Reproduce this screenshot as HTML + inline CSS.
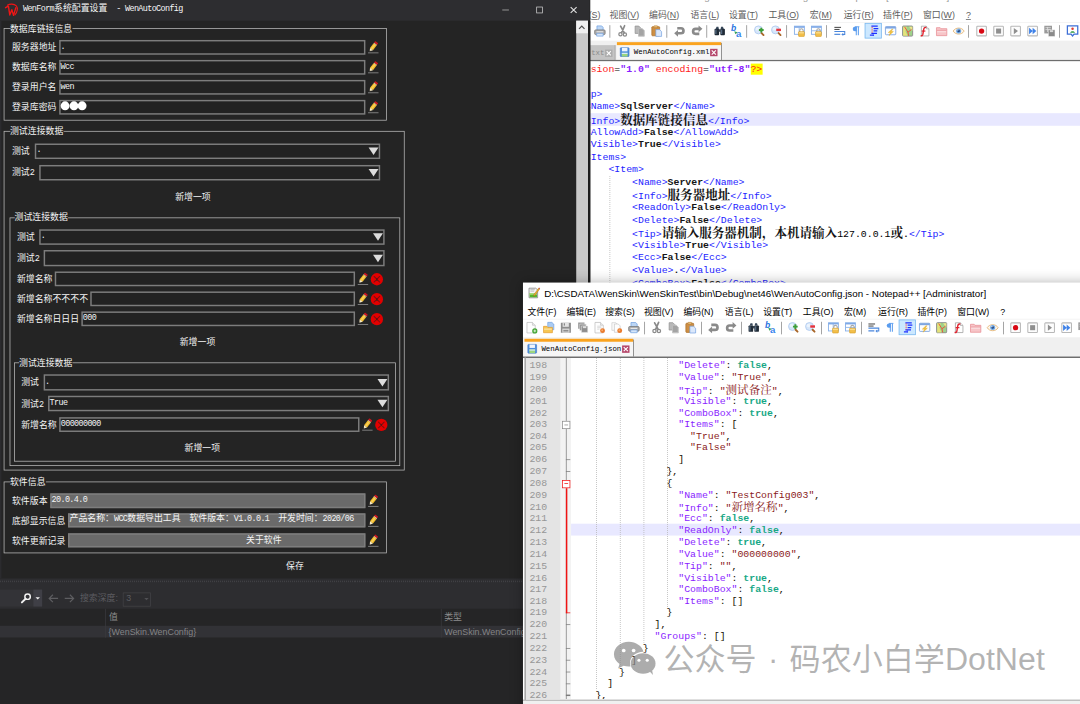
<!DOCTYPE html>
<html lang="zh"><head><meta charset="utf-8"><title>WenAutoConfig</title>
<style>
html,body{margin:0;padding:0;width:1080px;height:704px;overflow:hidden;background:#fff}
body{font-family:"Liberation Sans",sans-serif}
#wrap{position:relative;width:1080px;height:704px;overflow:hidden;background:#fff}
#stage{position:absolute;left:0;top:0;width:1461px;height:953px;transform:scale(0.7397);transform-origin:0 0;overflow:hidden;background:#fff}
.a{position:absolute;white-space:pre}
svg{display:block;overflow:visible}
.c{display:inline-block;vertical-align:baseline;white-space:nowrap;text-align:left;font-family:"Liberation Sans","Noto Sans CJK SC",sans-serif}
.ft{font:12px/14px "Liberation Sans",sans-serif;color:#f4f4f4}
.ft .m{font:11.4px "Liberation Mono",monospace;letter-spacing:-.84px}
.vs{font:12px/14px "Liberation Sans",sans-serif}
.np{overflow:hidden}
.tt{font:13.25px "Liberation Sans",sans-serif;color:#000}
.mn{font:12px "Liberation Sans",sans-serif;color:#000}
.tb{font:10px "Liberation Mono",monospace;color:#000}
.ed{overflow:hidden;background:#fff}
.ln{font:13.33px "Liberation Mono",monospace;color:#969696;text-align:right}
.cl{font:13.33px "Liberation Mono",monospace;color:#000}
.cl .c{font-size:15.6px;font-family:"Liberation Serif","Noto Serif CJK SC",serif}
.bk .cl .c{font-size:16.95px}
.ina .tt{color:#9a9a9a}
.ina .mn{color:#5c5c5c}
.k{color:#8a1dff}
.v{color:#8a1a1a}
.b{color:#18a886;font-weight:bold}
.p{color:#161000}
.xt{color:#2424ff}
.xb{color:#161616;font-weight:bold}
.xn{color:#000}
.xa{color:#ff1a1a}
.xv{color:#8a1dff;font-weight:bold}
.xr{color:#ff1a1a}
.xr.y,.yl{background:#ffff00}
.wm{font:42px "Liberation Sans","Noto Sans CJK SC",sans-serif;color:rgba(120,120,120,.56)}
</style></head>
<body><div id="wrap"><div id="stage">
<div class="a np ina" style="left:660.13px;top:-18.93px;width:946.33px;height:700px;background:#fff;box-shadow:0 0 17px rgba(0,0,0,.32)">
<div class="a" style="left:7.6px;top:6px;width:16px;height:16px"><svg width="16" height="16" viewBox="0 0 16 16"><path d="M1.200 1.600h9l2.600 2.400v10.600h-11.600z" fill="#f4f4f4" stroke="#7a7a7a" stroke-width="1"/><path d="M2 8h10v6h-10z" fill="#55b62e"/><path d="M2 8h10v2.400h-10z" fill="#a8dc7c"/><path d="M3 3.600h6M3 5.600h5" stroke="#a8a8a8" stroke-width=".9"/><path d="M14.200 1.400l1.400 1.200-6.400 9-2 .9.400-2.100z" fill="#f1b02c" stroke="#8a5a16" stroke-width=".5"/><path d="M14.200 1.400l1.400 1.200.5-1.500z" fill="#c8161d"/></svg></div>
<div class="a tt" style="left:29.3px;top:6px;height:18px;line-height:18px">D:\CSDATA\WenSkin\WenSkinTest\bin\Debug\net46\WenAutoConfig.xml - Notepad++ [Administrator]</div>
<div class="a mn" style="left:6.49px;top:32px;height:16px;line-height:16px"><span class="c" style="width:2em">文件</span>(<u>F</u>)</div>
<div class="a mn" style="left:59.21px;top:32px;height:16px;line-height:16px"><span class="c" style="width:2em">编辑</span>(<u>E</u>)</div>
<div class="a mn" style="left:111.67px;top:32px;height:16px;line-height:16px"><span class="c" style="width:2em">搜索</span>(<u>S</u>)</div>
<div class="a mn" style="left:163.99px;top:32px;height:16px;line-height:16px"><span class="c" style="width:2em">视图</span>(<u>V</u>)</div>
<div class="a mn" style="left:217.39px;top:32px;height:16px;line-height:16px"><span class="c" style="width:2em">编码</span>(<u>N</u>)</div>
<div class="a mn" style="left:273.35px;top:32px;height:16px;line-height:16px"><span class="c" style="width:2em">语言</span>(<u>L</u>)</div>
<div class="a mn" style="left:325.27px;top:32px;height:16px;line-height:16px"><span class="c" style="width:2em">设置</span>(<u>T</u>)</div>
<div class="a mn" style="left:378.8px;top:32px;height:16px;line-height:16px"><span class="c" style="width:2em">工具</span>(<u>O</u>)</div>
<div class="a mn" style="left:434.5px;top:32px;height:16px;line-height:16px"><span class="c" style="width:1em">宏</span>(<u>M</u>)</div>
<div class="a mn" style="left:480.47px;top:32px;height:16px;line-height:16px"><span class="c" style="width:2em">运行</span>(<u>R</u>)</div>
<div class="a mn" style="left:533.73px;top:32px;height:16px;line-height:16px"><span class="c" style="width:2em">插件</span>(<u>P</u>)</div>
<div class="a mn" style="left:587.54px;top:32px;height:16px;line-height:16px"><span class="c" style="width:2em">窗口</span>(<u>W</u>)</div>
<div class="a mn" style="left:645.67px;top:32px;height:16px;line-height:16px"><u>?</u></div>
<div class="a" style="left:0;top:49.4px;width:946.33px;height:1px;background:#f0f0f0"></div>
<div class="a" style="left:4.4px;top:53.3px;width:16px;height:16px"><svg width="16" height="16" viewBox="0 0 16 16"><path d="M1.4 .9h7.4l3.8 3.8v10.4h-11.2z" fill="#fdfdfd" stroke="#bdbdbd" stroke-width="1"/><path d="M8.8 .9v3.8h3.8" fill="#e9e9e9" stroke="#bdbdbd" stroke-width=".8"/><circle cx="12" cy="12.4" r="3.5" fill="#43a535"/><path d="M12 10.600v3.600M10.200 12.400h3.600" stroke="#e4f6dc" stroke-width="1.200"/></svg></div>
<div class="a" style="left:27.4px;top:53.3px;width:16px;height:16px"><svg width="16" height="16" viewBox="0 0 16 16"><path d="M6.5 .8h5.6l2.6 2.6v7.4h-8.2z" fill="#a9cbf3" stroke="#6f9fe0" stroke-width=".9"/><path d="M.8 6.2h4.6l1.2 1.4h6.2v7.2h-12z" fill="#f6c653" stroke="#e3992a" stroke-width=".9"/><rect x="1.6" y="9" width="10.4" height="2" fill="#fbe09a"/></svg></div>
<div class="a" style="left:50.4px;top:53.3px;width:16px;height:16px"><svg width="16" height="16" viewBox="0 0 16 16"><path d="M1.2 1.2h13.6v13.6h-13.6z" fill="#8e8e8e"/><rect x="3.6" y="1.2" width="8.4" height="5.6" fill="#e4e4e4"/><rect x="5.2" y="2" width="1.4" height="3.2" fill="#7a7a7a"/><rect x="3.2" y="9.2" width="9.6" height="5.6" fill="#dadada"/><rect x="4.6" y="11" width="6.8" height="2.2" fill="#8e8e8e"/></svg></div>
<div class="a" style="left:73.4px;top:53.3px;width:16px;height:16px"><svg width="16" height="16" viewBox="0 0 16 16"><path d="M1.6 1h8.6v8.4h-8.6z" fill="#9a9a9a"/><path d="M3.8 3.2h8.6v8.6h-8.6z" fill="#8a8a8a" stroke="#f4f4f4" stroke-width=".7"/><path d="M6 5.6h8.6v8.8h-8.6z" fill="#8e8e8e" stroke="#f4f4f4" stroke-width=".7"/><rect x="8" y="6" width="4.6" height="2.6" fill="#dedede"/></svg></div>
<div class="a" style="left:96.4px;top:53.3px;width:16px;height:16px"><svg width="16" height="16" viewBox="0 0 16 16"><path d="M1.4 .9h7.4l3.8 3.8v10.4h-11.2z" fill="#fdfdfd" stroke="#bdbdbd" stroke-width="1"/><path d="M8.8 .9v3.8h3.8" fill="#e9e9e9" stroke="#bdbdbd" stroke-width=".8"/><path d="M4.4 6h5.6M4.4 8h5.6M4.4 10h3" stroke="#c8c8c8" stroke-width=".9"/><circle cx="11.6" cy="12" r="3.3" fill="#ea7a2c"/><circle cx="11.1" cy="11.4" r="1.3" fill="#f6a869"/></svg></div>
<div class="a" style="left:119.4px;top:53.3px;width:16px;height:16px"><svg width="16" height="16" viewBox="0 0 16 16"><path d="M1.2 1.2h5.2l2.4 2.4v8h-7.6z" fill="#fbfbfb" stroke="#cacaca" stroke-width=".9"/><path d="M4.6 3h5.2l2.6 2.6v8.6h-7.8z" fill="#fdfdfd" stroke="#c4c4c4" stroke-width=".9"/><circle cx="11.8" cy="12" r="3.3" fill="#ea7a2c"/><circle cx="11.3" cy="11.4" r="1.3" fill="#f6a869"/></svg></div>
<div class="a" style="left:142.4px;top:53.3px;width:16px;height:16px"><svg width="16" height="16" viewBox="0 0 16 16"><path d="M4 1h6.4l2 2v5h-8.4z" fill="#bcd6f5" stroke="#6a9be0" stroke-width=".9"/><rect x=".9" y="6.4" width="14.2" height="6.4" rx="1.4" fill="#a9a9a9" stroke="#6c6c6c" stroke-width=".9"/><rect x="3.4" y="8.2" width="9.2" height="1.6" fill="#e6e6e6"/><path d="M3.6 11h8.8v3.8h-8.8z" fill="#d6e6f8" stroke="#6a9be0" stroke-width=".9"/></svg></div>
<div class="a" style="left:164.2px;top:52.6px;width:1.1px;height:17.6px;background:#858585"></div>
<div class="a" style="left:173.4px;top:53.3px;width:16px;height:16px"><svg width="16" height="16" viewBox="0 0 16 16"><path d="M10.400 .8 L6.400 10.200 M5 1.400 L9.800 10.200" stroke="#8a8a8a" stroke-width="2.300" fill="none" stroke-linecap="round"/><circle cx="4.800" cy="12.400" r="2.200" fill="none" stroke="#8a8a8a" stroke-width="1.700"/><circle cx="10.800" cy="12.600" r="2.200" fill="none" stroke="#8a8a8a" stroke-width="1.700"/></svg></div>
<div class="a" style="left:196.4px;top:53.3px;width:16px;height:16px"><svg width="16" height="16" viewBox="0 0 16 16"><path d="M1.6 1.2h5l2.6 2.6v7.4h-7.6z" fill="#b9b9b9" stroke="#8c8c8c" stroke-width=".9"/><path d="M6.2 4.6h5l2.8 2.8v7.6h-7.8z" fill="#a4a4a4" stroke="#f0f0f0" stroke-width=".9"/><path d="M6.2 4.6h5l2.8 2.8v7.6h-7.8z" fill="none" stroke="#8a8a8a" stroke-width=".5"/></svg></div>
<div class="a" style="left:219.4px;top:53.3px;width:16px;height:16px"><svg width="16" height="16" viewBox="0 0 16 16"><rect x="1.2" y="2" width="10.6" height="12.4" rx="1" fill="#cd8f45" stroke="#a86a22" stroke-width=".9"/><rect x="4" y=".8" width="5" height="2.6" rx=".6" fill="#e8c07a" stroke="#a86a22" stroke-width=".6"/><path d="M6.6 6h5l2.8 2.8v6.4h-7.8z" fill="#dbe8fb" stroke="#6f9fe0" stroke-width=".9"/></svg></div>
<div class="a" style="left:241.2px;top:52.6px;width:1.1px;height:17.6px;background:#858585"></div>
<div class="a" style="left:250.4px;top:53.3px;width:16px;height:16px"><svg width="16" height="16" viewBox="0 0 16 16"><path d="M5 11h4.600a3.400 3.400 0 0 0 0-6.800h-5" fill="none" stroke="#8a8a8a" stroke-width="3.600"/><path d="M.4 11l5.200-4.600v9.200z" fill="#8a8a8a"/></svg></div>
<div class="a" style="left:273.4px;top:53.3px;width:16px;height:16px"><svg width="16" height="16" viewBox="0 0 16 16"><path d="M11 5h-4.600a3.400 3.400 0 0 0 0 6.800h5" fill="none" stroke="#8a8a8a" stroke-width="3.600"/><path d="M15.600 5l-5.200-4.600v9.200z" fill="#8a8a8a"/></svg></div>
<div class="a" style="left:295.2px;top:52.6px;width:1.1px;height:17.6px;background:#858585"></div>
<div class="a" style="left:304.4px;top:53.3px;width:16px;height:16px"><svg width="16" height="16" viewBox="0 0 16 16"><path d="M2.6 5.2l1-3.2h2.6l.6 3.2M9.2 5.2l.6-3.2h2.6l1 3.2" fill="#394a5c"/><rect x="1" y="5" width="6.2" height="8.6" rx="1.2" fill="#1f2a36"/><rect x="8.8" y="5" width="6.2" height="8.6" rx="1.2" fill="#1f2a36"/><rect x="6.6" y="5.6" width="2.8" height="3.4" fill="#32414f"/><rect x="2" y="6" width="1.6" height="6" fill="#5a7088"/><rect x="9.8" y="6" width="1.6" height="6" fill="#5a7088"/></svg></div>
<div class="a" style="left:327.4px;top:53.3px;width:16px;height:16px"><svg width="16" height="16" viewBox="0 0 16 16"><text x=".2" y="8" font-family="Liberation Sans" font-weight="bold" font-style="italic" font-size="11.5" fill="#2b73e0">b</text><text x="7" y="15.600" font-family="Liberation Sans" font-weight="bold" font-size="13" fill="#3a86ee">a</text><path d="M4.600 8.200l4.600 1.400-3 2.600z" fill="#35a45a"/></svg></div>
<div class="a" style="left:349.2px;top:52.6px;width:1.1px;height:17.6px;background:#858585"></div>
<div class="a" style="left:358.4px;top:53.3px;width:16px;height:16px"><svg width="16" height="16" viewBox="0 0 16 16"><circle cx="6.4" cy="6.4" r="5.4" fill="#d6e6fa" stroke="#a9c6ee" stroke-width="1"/><circle cx="5" cy="5" r="2.4" fill="#ecf4fd"/><path d="M10.600 10.800l2.600 2.600" stroke="#a9672a" stroke-width="2.600" stroke-linecap="round"/><path d="M10.2 3.4v6.4M7 6.6h6.4" stroke="#3e9f38" stroke-width="2.6"/></svg></div>
<div class="a" style="left:381.4px;top:53.3px;width:16px;height:16px"><svg width="16" height="16" viewBox="0 0 16 16"><circle cx="6.4" cy="6.4" r="5.4" fill="#d6e6fa" stroke="#a9c6ee" stroke-width="1"/><circle cx="5" cy="5" r="2.4" fill="#ecf4fd"/><path d="M10.600 10.800l2.600 2.600" stroke="#a9672a" stroke-width="2.600" stroke-linecap="round"/><rect x="7.4" y="4.8" width="6.4" height="3.2" fill="#e8323c"/></svg></div>
<div class="a" style="left:403.2px;top:52.6px;width:1.1px;height:17.6px;background:#858585"></div>
<div class="a" style="left:412.4px;top:53.3px;width:16px;height:16px"><svg width="16" height="16" viewBox="0 0 16 16"><rect x="1" y="1.4" width="13.4" height="11" fill="#fff" stroke="#8db4ea" stroke-width="1.3"/><rect x="1" y="1.4" width="13.4" height="2.2" fill="#7fa9e6"/><path d="M7.4 3v9" stroke="#8db4ea" stroke-width="1.2"/><path d="M8.2 9.2v-2a2.3 2.3 0 0 1 4.6 0v2" fill="none" stroke="#a8a8a8" stroke-width="1.5"/><rect x="6.6" y="8.8" width="7.8" height="6.4" rx=".6" fill="#f3bf4a" stroke="#d79a1e" stroke-width=".8"/><rect x="7.2" y="9.4" width="6.6" height="1.8" fill="#fbdc8a"/></svg></div>
<div class="a" style="left:435.4px;top:53.3px;width:16px;height:16px"><svg width="16" height="16" viewBox="0 0 16 16"><rect x="1" y="1.4" width="13.4" height="11" fill="#fff" stroke="#8db4ea" stroke-width="1.3"/><rect x="1" y="1.4" width="13.4" height="2.2" fill="#7fa9e6"/><path d="M1 7.6h13" stroke="#8db4ea" stroke-width="1.2"/><path d="M8.2 9.2v-2a2.3 2.3 0 0 1 4.6 0v2" fill="none" stroke="#a8a8a8" stroke-width="1.5"/><rect x="6.6" y="8.8" width="7.8" height="6.4" rx=".6" fill="#f3bf4a" stroke="#d79a1e" stroke-width=".8"/><rect x="7.2" y="9.4" width="6.6" height="1.8" fill="#fbdc8a"/></svg></div>
<div class="a" style="left:457.2px;top:52.6px;width:1.1px;height:17.6px;background:#858585"></div>
<div class="a" style="left:466.4px;top:53.3px;width:16px;height:16px"><svg width="16" height="16" viewBox="0 0 16 16"><path d="M1 3h9M1 5.8h7" stroke="#3a3a3a" stroke-width="1.3"/><path d="M1 8.6h14v4h-3" fill="none" stroke="#4a86dc" stroke-width="1.4"/><path d="M1 12.4h8" stroke="#4a86dc" stroke-width="1.6"/><path d="M13 10.4l-2.6 2.2 2.6 2.2z" fill="#4a86dc"/></svg></div>
<div class="a" style="left:489.4px;top:53.3px;width:16px;height:16px"><svg width="16" height="16" viewBox="0 0 16 16"><path d="M7.600 2.200v11.400M10.400 2.200v11.400" stroke="#5a9cee" stroke-width="1.400"/><path d="M8.200 2.200h-2.400a3 3 0 0 0 0 6h2.400z" fill="#5a9cee"/><path d="M5.600 2.200h6.200" stroke="#5a9cee" stroke-width="1.200"/></svg></div>
<div class="a" style="left:508.9px;top:49.6px;width:23px;height:21.6px;background:#cce8ff;border:1px solid #7ab7ee;box-sizing:border-box"></div>
<div class="a" style="left:512.4px;top:53.3px;width:16px;height:16px"><svg width="16" height="16" viewBox="0 0 16 16"><path d="M5 1.4h8.6M8 4.6h6.4M8 7.8h5M5 11h7.6M3 13.6h5.6" stroke="#1f2fff" stroke-width="1.7"/><path d="M6 2.4v8" stroke="#ff2a2a" stroke-width="1.2" stroke-dasharray="1.4 1"/><path d="M7.6 11v4.4" stroke="#1f2fff" stroke-width="1" stroke-dasharray="1.2 1"/></svg></div>
<div class="a" style="left:535.4px;top:53.3px;width:16px;height:16px"><svg width="16" height="16" viewBox="0 0 16 16"><rect x="1" y="2" width="14" height="11" rx="1" fill="#fbfdff" stroke="#7fa6e0" stroke-width="1.2"/><rect x="1" y="2" width="14" height="2.6" fill="#7fa6e0"/><path d="M9.8 5.4l-5 4.6h3l-2 4.2 6-5.6h-3.2l2.6-3.2z" fill="#f2c23a" stroke="#e0a420" stroke-width=".5"/></svg></div>
<div class="a" style="left:558.4px;top:53.3px;width:16px;height:16px"><svg width="16" height="16" viewBox="0 0 16 16"><rect x="1.2" y="1.2" width="13.6" height="13.6" rx="1" fill="#9fd28a" stroke="#8e8e8e" stroke-width="1.3"/><path d="M2 2h5l-2 6 3 6.4h-6z" fill="#e6e27a"/><path d="M10 2h4.4v6z" fill="#f0e58c"/><path d="M4 2.4l4.4 7 1 5M8.2 9.6l5-3.6" fill="none" stroke="#e8553c" stroke-width="1.3"/></svg></div>
<div class="a" style="left:581.4px;top:53.3px;width:16px;height:16px"><svg width="16" height="16" viewBox="0 0 16 16"><path d="M3.6 1.4h6.6l3.6 3.6v9.6h-10.2z" fill="#fff" stroke="#9a9a9a" stroke-width="1"/><path d="M10.2 1.4v3.6h3.6" fill="#eee" stroke="#9a9a9a" stroke-width=".8"/><path d="M10.4 3.2c-2.4-.8-3.4.6-3.8 3.2l-1 6.2c-.3 1.6-1.4 2.2-3 1.6" fill="none" stroke="#e0222e" stroke-width="1.9"/><path d="M4 8h5" stroke="#e0222e" stroke-width="1.6"/></svg></div>
<div class="a" style="left:604.4px;top:53.3px;width:16px;height:16px"><svg width="16" height="16" viewBox="0 0 16 16"><path d="M1 3.4h5l1 1.4h8v9.4h-14z" fill="#f7c5c8" stroke="#e88d94" stroke-width="1"/><path d="M1.6 7h12.8" stroke="#e88d94" stroke-width=".9"/><path d="M2 8.2h12v1.4h-12z" fill="#fbe1e3"/></svg></div>
<div class="a" style="left:627.4px;top:53.3px;width:16px;height:16px"><svg width="16" height="16" viewBox="0 0 16 16"><path d="M.6 8c3-5.4 11.800-5.400 14.800 0-3 5.400-11.800 5.400-14.800 0z" fill="#fdf6ec" stroke="#e2b06c" stroke-width="1.1"/><circle cx="8" cy="7.800" r="3.400" fill="#6fa8e6"/><circle cx="8" cy="7.800" r="1.700" fill="#23467e"/><circle cx="7" cy="6.600" r=".8" fill="#fff"/></svg></div>
<div class="a" style="left:649.2px;top:52.6px;width:1.1px;height:17.6px;background:#858585"></div>
<div class="a" style="left:658.4px;top:53.3px;width:16px;height:16px"><svg width="16" height="16" viewBox="0 0 16 16"><rect x="1.5" y="1.5" width="13" height="13" rx="1" fill="#fdfdfd" stroke="#b8b8b8" stroke-width="1.4"/><circle cx="8" cy="8" r="3.6" fill="#d80814"/></svg></div>
<div class="a" style="left:681.4px;top:53.3px;width:16px;height:16px"><svg width="16" height="16" viewBox="0 0 16 16"><rect x="1.5" y="1.5" width="13" height="13" rx="1" fill="#fdfdfd" stroke="#b8b8b8" stroke-width="1.4"/><rect x="4.600" y="4.600" width="6.800" height="6.800" fill="#8f8f8f"/></svg></div>
<div class="a" style="left:704.4px;top:53.3px;width:16px;height:16px"><svg width="16" height="16" viewBox="0 0 16 16"><rect x="1.5" y="1.5" width="13" height="13" rx="1" fill="#fdfdfd" stroke="#b8b8b8" stroke-width="1.4"/><path d="M5.600 3.800l5.600 4.200-5.600 4.200z" fill="#8f8f8f"/></svg></div>
<div class="a" style="left:727.4px;top:53.3px;width:16px;height:16px"><svg width="16" height="16" viewBox="0 0 16 16"><rect x="1.5" y="1.5" width="13" height="13" rx="1" fill="#fdfdfd" stroke="#b8b8b8" stroke-width="1.4"/><path d="M3.200 3.600l5 4.400-5 4.400zM8 3.600l5 4.400-5 4.400z" fill="#3f82e8"/></svg></div>
<div class="a" style="left:750.4px;top:53.3px;width:16px;height:16px"><svg width="16" height="16" viewBox="0 0 16 16"><rect x=".8" y=".8" width="10.400" height="10.400" fill="#9a9a9a"/><path d="M2.400 3.400h7.200M2.400 6h7.200M5.200 2.400v7" stroke="#e2e2e2" stroke-width="1"/><rect x="6.400" y="6.400" width="8.800" height="8.800" fill="#8a8a8a" stroke="#f0f0f0" stroke-width=".6"/><rect x="8.400" y="6.800" width="4.400" height="2.600" fill="#d8d8d8"/></svg></div>
<div class="a" style="left:772.2px;top:52.6px;width:1.1px;height:17.6px;background:#858585"></div>
<div class="a" style="left:781.4px;top:53.3px;width:16px;height:16px"><svg width="16" height="16" viewBox="0 0 16 16"><path d="M1 1h14v11h-5l-2 2.600-2-2.600h-5z" fill="#fff" stroke="#3d6fd6" stroke-width="1.700"/><circle cx="8" cy="4.800" r="1.700" fill="#e03a2e"/><path d="M4.800 10.400c0-3 6.400-3 6.400 0z" fill="#2f9a44"/></svg></div>
<div class="a" style="left:0;top:73.6px;width:946.33px;height:27px;background:#f0f0f0"></div>
<div class="a" style="left:100px;top:79.6px;width:71.6px;height:20.4px;background:#c4c4c4;border-right:1px solid #a0a0a0;box-sizing:border-box"></div>
<div class="a tb" style="left:100px;top:84px;height:14px;line-height:14px;color:#8a8a8a;width:57.1px;text-align:right;overflow:hidden">new 1.txt</div>
<div class="a" style="left:158.1px;top:86.4px;width:10px;height:10px"><svg width="10" height="10" viewBox="0 0 10 10"><rect x="0" y="0" width="10" height="10" fill="#adadad"/><path d="M2.200 2.200l5.600 5.600M7.800 2.200l-5.600 5.600" stroke="#fff" stroke-width="1.500"/></svg></div>
<div class="a" style="left:173.6px;top:76.6px;width:142.4px;height:23.4px;background:#f6f6f6;border-right:1.5px solid #6e6e6e;box-sizing:border-box"></div>
<div class="a" style="left:173.6px;top:76.2px;width:141.4px;height:4.2px;background:#faa31e"></div>
<div class="a" style="left:177.9px;top:83.2px;width:13px;height:13px"><svg width="13" height="13" viewBox="0 0 13 13"><rect x=".6" y=".6" width="11.800" height="11.800" rx=".8" fill="#4f8fe0" stroke="#3a74c6" stroke-width=".8"/><rect x="2.800" y=".8" width="7.400" height="4.600" fill="#eef4fc"/><rect x="2.600" y="7.400" width="7.800" height="5" fill="#9cd67e"/><rect x="2.600" y="7.400" width="7.800" height="1.600" fill="#d7e9fb"/></svg></div>
<div class="a tb" style="left:196.8px;top:83px;height:14px;line-height:14px">WenAutoConfig.xml</div>
<div class="a" style="left:299.4px;top:85.4px;width:10px;height:10px"><svg width="10" height="10" viewBox="0 0 10 10"><rect x="0" y="0" width="10" height="10" fill="#b5476b"/><path d="M2.200 2.200l5.600 5.600M7.800 2.200l-5.600 5.600" stroke="#fff" stroke-width="1.500"/></svg></div>
<div class="a" style="left:0;top:100.2px;width:946.33px;height:1.6px;background:#6e6e6e"></div>
<div class="a" style="left:2.3px;top:101px;width:1.9px;height:600px;background:#9c9c9c"></div>
<div class="a ed" style="left:4px;top:102px;width:942.33px;height:598px"><div class="bk"><div class="a" style="left:0;top:0;width:47.6px;height:600px;background:#e4e4e4"></div>
<div class="a" style="left:47.6px;top:0;width:14.2px;height:600px;background:#f3f3f3"></div>
<div class="a" style="left:61.8px;top:70.2px;width:1200px;height:17px;background:#e8e8ff"></div>
<div class="a" style="left:159.7px;top:155.2px;width:1px;height:300px;background-image:repeating-linear-gradient(180deg,#b4b4b4 0,#b4b4b4 1.35px,transparent 1.35px,transparent 2.7px)"></div>
<div class="a cl" style="left:62.4px;top:2.2px;height:17px;line-height:17px"><span class="xr">&lt;?xml</span> <span class="xa">version</span>=<span class="xv">&quot;1.0&quot;</span> <span class="xa">encoding</span>=<span class="xv">&quot;utf-8&quot;</span><span class="xr y">?&gt;</span></div>
<div class="a cl" style="left:62.4px;top:19.2px;height:17px;line-height:17px"><span class="xt">&lt;Config&gt;</span></div>
<div class="a cl" style="left:94.4px;top:36.2px;height:17px;line-height:17px"><span class="xt">&lt;Group&gt;</span></div>
<div class="a cl" style="left:126.4px;top:53.2px;height:17px;line-height:17px"><span class="xt">&lt;Name&gt;</span><span class="xb">SqlServer</span><span class="xt">&lt;/Name&gt;</span></div>
<div class="a cl" style="left:126.4px;top:70.2px;height:17px;line-height:17px"><span class="xt">&lt;Info&gt;</span><span class="xb"><span class="c" style="width:7em">数据库链接信息</span></span><span class="xt">&lt;/Info&gt;</span></div>
<div class="a cl" style="left:126.4px;top:87.2px;height:17px;line-height:17px"><span class="xt">&lt;AllowAdd&gt;</span><span class="xb">False</span><span class="xt">&lt;/AllowAdd&gt;</span></div>
<div class="a cl" style="left:126.4px;top:104.2px;height:17px;line-height:17px"><span class="xt">&lt;Visible&gt;</span><span class="xb">True</span><span class="xt">&lt;/Visible&gt;</span></div>
<div class="a cl" style="left:126.4px;top:121.2px;height:17px;line-height:17px"><span class="xt">&lt;Items&gt;</span></div>
<div class="a cl" style="left:158.4px;top:138.2px;height:17px;line-height:17px"><span class="xt">&lt;Item&gt;</span></div>
<div class="a cl" style="left:190.4px;top:155.2px;height:17px;line-height:17px"><span class="xt">&lt;Name&gt;</span><span class="xb">Server</span><span class="xt">&lt;/Name&gt;</span></div>
<div class="a cl" style="left:190.4px;top:172.2px;height:17px;line-height:17px"><span class="xt">&lt;Info&gt;</span><span class="xb"><span class="c" style="width:5em">服务器地址</span></span><span class="xt">&lt;/Info&gt;</span></div>
<div class="a cl" style="left:190.4px;top:189.2px;height:17px;line-height:17px"><span class="xt">&lt;ReadOnly&gt;</span><span class="xb">False</span><span class="xt">&lt;/ReadOnly&gt;</span></div>
<div class="a cl" style="left:190.4px;top:206.2px;height:17px;line-height:17px"><span class="xt">&lt;Delete&gt;</span><span class="xb">False</span><span class="xt">&lt;/Delete&gt;</span></div>
<div class="a cl" style="left:190.4px;top:223.2px;height:17px;line-height:17px"><span class="xt">&lt;Tip&gt;</span><span class="xb"><span class="c" style="width:14em">请输入服务器机制，本机请输入</span></span><span class="xn">127.0.0.1</span><span class="xb"><span class="c" style="width:1em">或</span>.</span><span class="xt">&lt;/Tip&gt;</span></div>
<div class="a cl" style="left:190.4px;top:240.2px;height:17px;line-height:17px"><span class="xt">&lt;Visible&gt;</span><span class="xb">True</span><span class="xt">&lt;/Visible&gt;</span></div>
<div class="a cl" style="left:190.4px;top:257.2px;height:17px;line-height:17px"><span class="xt">&lt;Ecc&gt;</span><span class="xb">False</span><span class="xt">&lt;/Ecc&gt;</span></div>
<div class="a cl" style="left:190.4px;top:274.2px;height:17px;line-height:17px"><span class="xt">&lt;Value&gt;</span><span class="xb">.</span><span class="xt">&lt;/Value&gt;</span></div>
<div class="a cl" style="left:190.4px;top:291.2px;height:17px;line-height:17px"><span class="xt">&lt;ComboBox&gt;</span><span class="xb">False</span><span class="xt">&lt;/ComboBox&gt;</span></div>
<div class="a cl" style="left:190.4px;top:308.2px;height:17px;line-height:17px"><span class="xt">&lt;Items&gt;</span><span class="xt">&lt;/Items&gt;</span></div></div></div>
</div>
<div class="a" style="left:0px;top:757.06px;width:730.03px;height:194.68px;background:#2d2d30"></div>
<div class="a" style="left:0px;top:785.32px;width:707.04px;height:1.62px;background-image:repeating-linear-gradient(90deg,#404044 0,#404044 1.35px,transparent 1.35px,transparent 2.7px)"></div>
<div class="a" style="left:0px;top:797.35px;width:44.61px;height:22.71px;background:#333337"></div>
<div class="a" style="left:44.61px;top:797.35px;width:12.17px;height:22.71px;background:#3f3f46"></div>
<svg class="a" style="left:27.85px;top:801.14px" width="15" height="15" viewBox="0 0 15 15"><circle cx="9.3" cy="5.6" r="3.7" stroke="#f2f2f2" stroke-width="2" fill="none"/><path d="M6.6 8.4 L1.6 13.4" stroke="#f2f2f2" stroke-width="2.6" stroke-linecap="round"/></svg>
<svg class="a" style="left:47.59px;top:806.95px" width="6" height="4" viewBox="0 0 6 4"><path d="M0 0.4 H6 L3 3.6 Z" fill="#f2f2f2"/></svg>
<svg class="a" style="left:64.89px;top:802.71px" width="14" height="12" viewBox="0 0 14 12"><path d="M13.5 6 H1.5 M6.5 1 L1.5 6 L6.5 11" stroke="#5e5e61" stroke-width="1.6" fill="none"/></svg>
<svg class="a" style="left:86.79px;top:802.71px" width="14" height="12" viewBox="0 0 14 12"><path d="M0.5 6 H12.5 M7.5 1 L12.5 6 L7.5 11" stroke="#5e5e61" stroke-width="1.6" fill="none"/></svg>
<div class="a vs" style="top:801.44px;height:14px;line-height:14px;left:108.15px;color:#5c5c60"><span class="c" style="width:4em">搜索深度</span>:</div>
<div class="a" style="left:165.74px;top:800.87px;width:38.67px;height:18.65px;border:1px solid #434346;box-sizing:border-box;background:#2d2d30"></div>
<div class="a vs" style="top:802.25px;height:14px;line-height:14px;left:170.61px;color:#5c5c60">3</div>
<svg class="a" style="left:194.94px;top:808.44px" width="6" height="4" viewBox="0 0 6 4"><path d="M0 0.4 H6 L3 3.6 Z" fill="#505054"/></svg>
<div class="a" style="left:0px;top:822.77px;width:730.03px;height:22.98px;background:#252526"></div>
<div class="a" style="left:0px;top:845.75px;width:730.03px;height:15.95px;background:#323236"></div>
<div class="a" style="left:0px;top:861.7px;width:730.03px;height:90.04px;background:#252526"></div>
<div class="a" style="left:141.68px;top:822.77px;width:1.08px;height:38.93px;background:#3a3a3e"></div>
<div class="a" style="left:595.65px;top:822.77px;width:1.08px;height:38.93px;background:#3a3a3e"></div>
<div class="a vs" style="top:826.58px;height:14px;line-height:14px;left:147.36px;color:#8c8c8c"><span class="c" style="width:1em">值</span></div>
<div class="a vs" style="top:826.58px;height:14px;line-height:14px;left:600.51px;color:#8c8c8c"><span class="c" style="width:2em">类型</span></div>
<div class="a vs" style="top:846.59px;height:14px;line-height:14px;left:146.82px;color:#848486">{WenSkin.WenConfig}</div>
<div class="a vs" style="top:846.59px;height:14px;line-height:14px;left:600.51px;color:#848486">WenSkin.WenConfig</div>
<div class="a" style="left:0px;top:0px;width:798.03px;height:781.67px;background:#242424"></div>
<div class="a" style="left:0px;top:27.85px;width:2.16px;height:753.82px;background:#2b2b2e"></div>
<div class="a" style="left:0px;top:0px;width:797.08px;height:27.85px;background:#2d2d30"></div>
<div class="a" style="left:6.76px;top:4.6px;width:17px;height:17px"><svg width="17" height="17" viewBox="0 0 17 17"><path d="M3 2c3-1.900 8.800-2.300 12.100 1 2.100 2.700 1.800 8.200-1.900 12" fill="none" stroke="#f01616" stroke-width="1.500" stroke-linecap="round"/><path d="M.5 5.400L4.400 3.300 6.200 15.200 9 8.200 11.300 15.800 14.300 5.600" fill="none" stroke="#f01616" stroke-width="1.900" stroke-linejoin="round" stroke-linecap="round"/></svg></div>
<div class="a ft" style="top:4.22px;height:14px;line-height:14px;left:31.09px;color:#f6f6f6"><span class="m">WenForm</span><span class="c" style="width:6em">系统配置设置</span><span class="m">  - WenAutoConfig</span></div>
<div class="a" style="left:678.92px;top:12.71px;width:8.93px;height:1.08px;background:#b8b8b8"></div>
<div class="a" style="left:724.89px;top:9.33px;width:8.92px;height:8.65px;border:1px solid #d0d0d0;box-sizing:border-box"></div>
<svg class="a" style="left:770.58px;top:8.92px" width="9" height="9" viewBox="0 0 9 9"><path d="M0.5 0.5 L8.5 8.5 M8.5 0.5 L0.5 8.5" stroke="#e0e0e0" stroke-width="1.5" fill="none"/></svg>
<div class="a" style="left:778.56px;top:27.85px;width:16.63px;height:753.82px;background:#c9c9c9"></div>
<div class="a" style="left:778.56px;top:27.85px;width:16.63px;height:16.76px;background:#f0f0f0"></div>
<svg class="a" style="left:782.48px;top:34.07px" width="9" height="6" viewBox="0 0 9 6"><path d="M0.8 5 L4.5 1.3 L8.2 5" stroke="#505050" stroke-width="1.7" fill="none"/></svg>
<div class="a" style="left:795.19px;top:27.85px;width:2.84px;height:753.82px;background:#1c1c1c"></div>
<div class="a" style="left:5.41px;top:37.99px;width:518.05px;height:125.45px;border:1px solid #bdbdbd;box-sizing:border-box"></div>
<div class="a ft" style="left:13.52px;top:31.53px;width:84.63px;height:14px;line-height:14px;background:#242424"><span class="c" style="width:7em">数据库链接信息</span></div>
<div class="a ft" style="top:57.08px;height:14px;line-height:14px;left:16.22px;"><span class="c" style="width:5em">服务器地址</span></div>
<div class="a" style="left:79.76px;top:53.67px;width:414.49px;height:20.28px;border:2px solid #7d7d7d;box-sizing:border-box;background:#222222"></div>
<div class="a ft" style="top:54.51px;height:14px;line-height:14px;left:81.93px;"><span class="m">.</span></div>
<div class="a" style="left:497.77px;top:55.64px;width:15px;height:17px"><svg width="15" height="17" viewBox="0 0 15 17"><g transform="rotate(37.5 6.6 7.2)"><rect x="4.050" y="-.55" width="5.100" height="2.900" rx=".7" fill="#c8161d"/><rect x="4.050" y="2.200" width="5.100" height=".9" fill="#ece4d6"/><rect x="4.050" y="3.100" width="5.100" height="8" fill="#f5bd2a"/><rect x="5.600" y="3.100" width="1.800" height="8" fill="#f9d05a"/><path d="M4.050 11.100h5.100l-2.550 3.900z" fill="#f8ebc6"/><path d="M5.900 13.900h1.400l-.7 1.100z" fill="#5a5044"/></g><rect x="-.4" y="15" width="14.100" height="1" fill="#9c9c9c"/></svg></div>
<div class="a ft" style="top:84.12px;height:14px;line-height:14px;left:16.22px;"><span class="c" style="width:5em">数据库名称</span></div>
<div class="a" style="left:79.76px;top:80.71px;width:414.49px;height:20.28px;border:2px solid #7d7d7d;box-sizing:border-box;background:#222222"></div>
<div class="a ft" style="top:81.55px;height:14px;line-height:14px;left:81.93px;"><span class="m">Wcc</span></div>
<div class="a" style="left:497.77px;top:82.68px;width:15px;height:17px"><svg width="15" height="17" viewBox="0 0 15 17"><g transform="rotate(37.5 6.6 7.2)"><rect x="4.050" y="-.55" width="5.100" height="2.900" rx=".7" fill="#c8161d"/><rect x="4.050" y="2.200" width="5.100" height=".9" fill="#ece4d6"/><rect x="4.050" y="3.100" width="5.100" height="8" fill="#f5bd2a"/><rect x="5.600" y="3.100" width="1.800" height="8" fill="#f9d05a"/><path d="M4.050 11.100h5.100l-2.550 3.900z" fill="#f8ebc6"/><path d="M5.900 13.900h1.400l-.7 1.100z" fill="#5a5044"/></g><rect x="-.4" y="15" width="14.100" height="1" fill="#9c9c9c"/></svg></div>
<div class="a ft" style="top:111.16px;height:14px;line-height:14px;left:16.22px;"><span class="c" style="width:5em">登录用户名</span></div>
<div class="a" style="left:79.76px;top:107.75px;width:414.49px;height:20.27px;border:2px solid #7d7d7d;box-sizing:border-box;background:#222222"></div>
<div class="a ft" style="top:108.59px;height:14px;line-height:14px;left:81.93px;"><span class="m">wen</span></div>
<div class="a" style="left:497.77px;top:109.72px;width:15px;height:17px"><svg width="15" height="17" viewBox="0 0 15 17"><g transform="rotate(37.5 6.6 7.2)"><rect x="4.050" y="-.55" width="5.100" height="2.900" rx=".7" fill="#c8161d"/><rect x="4.050" y="2.200" width="5.100" height=".9" fill="#ece4d6"/><rect x="4.050" y="3.100" width="5.100" height="8" fill="#f5bd2a"/><rect x="5.600" y="3.100" width="1.800" height="8" fill="#f9d05a"/><path d="M4.050 11.100h5.100l-2.550 3.900z" fill="#f8ebc6"/><path d="M5.900 13.900h1.400l-.7 1.100z" fill="#5a5044"/></g><rect x="-.4" y="15" width="14.100" height="1" fill="#9c9c9c"/></svg></div>
<div class="a ft" style="top:138.19px;height:14px;line-height:14px;left:16.22px;"><span class="c" style="width:5em">登录库密码</span></div>
<div class="a" style="left:79.76px;top:134.78px;width:414.49px;height:20.28px;border:2px solid #7d7d7d;box-sizing:border-box;background:#222222"></div>
<div class="a" style="left:497.77px;top:136.75px;width:15px;height:17px"><svg width="15" height="17" viewBox="0 0 15 17"><g transform="rotate(37.5 6.6 7.2)"><rect x="4.050" y="-.55" width="5.100" height="2.900" rx=".7" fill="#c8161d"/><rect x="4.050" y="2.200" width="5.100" height=".9" fill="#ece4d6"/><rect x="4.050" y="3.100" width="5.100" height="8" fill="#f5bd2a"/><rect x="5.600" y="3.100" width="1.800" height="8" fill="#f9d05a"/><path d="M4.050 11.100h5.100l-2.550 3.900z" fill="#f8ebc6"/><path d="M5.900 13.900h1.400l-.7 1.100z" fill="#5a5044"/></g><rect x="-.4" y="15" width="14.100" height="1" fill="#9c9c9c"/></svg></div>
<div class="a" style="left:82.47px;top:137.49px;width:11.9px;height:11.9px;border-radius:50%;background:#fff"></div>
<div class="a" style="left:93.69px;top:137.49px;width:11.9px;height:11.9px;border-radius:50%;background:#fff"></div>
<div class="a" style="left:104.91px;top:137.49px;width:11.9px;height:11.9px;border-radius:50%;background:#fff"></div>
<div class="a" style="left:5.41px;top:176.69px;width:541.97px;height:459.24px;border:1px solid #bdbdbd;box-sizing:border-box"></div>
<div class="a ft" style="left:13.52px;top:170.23px;width:72.46px;height:14px;line-height:14px;background:#242424"><span class="c" style="width:6em">测试连接数据</span></div>
<div class="a ft" style="top:197.14px;height:14px;line-height:14px;left:16.22px;"><span class="c" style="width:2em">测试</span></div>
<div class="a" style="left:47.32px;top:193.73px;width:466.67px;height:21.63px;border:2px solid #7d7d7d;box-sizing:border-box;background:#222222"></div>
<div class="a ft" style="top:195.24px;height:14px;line-height:14px;left:49.48px;"><span class="m">.</span></div>
<svg class="a" style="left:498.48px;top:199.31px" width="14" height="11" viewBox="0 0 14 11"><path d="M0.3 0.4 H13.7 L7 10.6 Z" fill="#dcdcdc"/></svg>
<div class="a ft" style="top:226.07px;height:14px;line-height:14px;left:16.22px;"><span class="c" style="width:2em">测试</span><span class="m">2</span></div>
<div class="a" style="left:52.99px;top:222.52px;width:461px;height:21.63px;border:2px solid #7d7d7d;box-sizing:border-box;background:#222222"></div>
<svg class="a" style="left:498.48px;top:228.11px" width="14" height="11" viewBox="0 0 14 11"><path d="M0.3 0.4 H13.7 L7 10.6 Z" fill="#dcdcdc"/></svg>
<div class="a ft" style="top:259.59px;height:14px;line-height:14px;left:160.92px;width:200px;text-align:center;"><span class="c" style="width:4em">新增一项</span></div>
<div class="a" style="left:13.25px;top:293.77px;width:527.51px;height:336.22px;border:1px solid #bdbdbd;box-sizing:border-box"></div>
<div class="a ft" style="left:19.74px;top:287.31px;width:72.46px;height:14px;line-height:14px;background:#242424"><span class="c" style="width:6em">测试连接数据</span></div>
<div class="a ft" style="top:313.13px;height:14px;line-height:14px;left:22.98px;"><span class="c" style="width:2em">测试</span></div>
<div class="a" style="left:52.99px;top:309.58px;width:466.95px;height:21.09px;border:2px solid #7d7d7d;box-sizing:border-box;background:#222222"></div>
<div class="a ft" style="top:310.83px;height:14px;line-height:14px;left:55.16px;"><span class="m">.</span></div>
<svg class="a" style="left:504.42px;top:314.9px" width="14" height="11" viewBox="0 0 14 11"><path d="M0.3 0.4 H13.7 L7 10.6 Z" fill="#dcdcdc"/></svg>
<div class="a ft" style="top:342.06px;height:14px;line-height:14px;left:22.98px;"><span class="c" style="width:2em">测试</span><span class="m">2</span></div>
<div class="a" style="left:58.67px;top:338.25px;width:461.27px;height:21.36px;border:2px solid #7d7d7d;box-sizing:border-box;background:#222222"></div>
<svg class="a" style="left:504.42px;top:343.7px" width="14" height="11" viewBox="0 0 14 11"><path d="M0.3 0.4 H13.7 L7 10.6 Z" fill="#dcdcdc"/></svg>
<div class="a ft" style="top:370.18px;height:14px;line-height:14px;left:22.98px;"><span class="c" style="width:4em">新增名称</span></div>
<div class="a" style="left:73.81px;top:366.91px;width:405.84px;height:20px;border:2px solid #7d7d7d;box-sizing:border-box;background:#222222"></div>
<div class="a" style="left:483.71px;top:368.87px;width:15px;height:17px"><svg width="15" height="17" viewBox="0 0 15 17"><g transform="rotate(37.5 6.6 7.2)"><rect x="4.050" y="-.55" width="5.100" height="2.900" rx=".7" fill="#c8161d"/><rect x="4.050" y="2.200" width="5.100" height=".9" fill="#ece4d6"/><rect x="4.050" y="3.100" width="5.100" height="8" fill="#f5bd2a"/><rect x="5.600" y="3.100" width="1.800" height="8" fill="#f9d05a"/><path d="M4.050 11.100h5.100l-2.550 3.900z" fill="#f8ebc6"/><path d="M5.900 13.900h1.400l-.7 1.100z" fill="#5a5044"/></g><rect x="-.4" y="15" width="14.100" height="1" fill="#9c9c9c"/></svg></div>
<div class="a" style="left:501.44px;top:368.68px;width:17px;height:17px"><svg width="17" height="17" viewBox="0 0 17 17"><circle cx="8.500" cy="8.500" r="8.300" fill="#e30000"/><path d="M4.700 4.700l7.600 7.600M12.300 4.700l-7.600 7.600" stroke="#6a1212" stroke-width="1.400" stroke-linecap="round" opacity=".85"/><circle cx="8.500" cy="8.500" r="1.300" fill="#5e1010"/></svg></div>
<div class="a ft" style="top:397.22px;height:14px;line-height:14px;left:22.98px;"><span class="c" style="width:8em">新增名称不不不不</span></div>
<div class="a" style="left:122.21px;top:393.94px;width:357.44px;height:20.01px;border:2px solid #7d7d7d;box-sizing:border-box;background:#222222"></div>
<div class="a" style="left:483.71px;top:395.91px;width:15px;height:17px"><svg width="15" height="17" viewBox="0 0 15 17"><g transform="rotate(37.5 6.6 7.2)"><rect x="4.050" y="-.55" width="5.100" height="2.900" rx=".7" fill="#c8161d"/><rect x="4.050" y="2.200" width="5.100" height=".9" fill="#ece4d6"/><rect x="4.050" y="3.100" width="5.100" height="8" fill="#f5bd2a"/><rect x="5.600" y="3.100" width="1.800" height="8" fill="#f9d05a"/><path d="M4.050 11.100h5.100l-2.550 3.900z" fill="#f8ebc6"/><path d="M5.900 13.900h1.400l-.7 1.100z" fill="#5a5044"/></g><rect x="-.4" y="15" width="14.100" height="1" fill="#9c9c9c"/></svg></div>
<div class="a" style="left:501.44px;top:395.72px;width:17px;height:17px"><svg width="17" height="17" viewBox="0 0 17 17"><circle cx="8.500" cy="8.500" r="8.300" fill="#e30000"/><path d="M4.700 4.700l7.600 7.600M12.300 4.700l-7.600 7.600" stroke="#6a1212" stroke-width="1.400" stroke-linecap="round" opacity=".85"/><circle cx="8.500" cy="8.500" r="1.300" fill="#5e1010"/></svg></div>
<div class="a ft" style="top:424.26px;height:14px;line-height:14px;left:22.98px;"><span class="c" style="width:7em">新增名称日日日</span></div>
<div class="a" style="left:109.77px;top:420.98px;width:369.88px;height:20.01px;border:2px solid #7d7d7d;box-sizing:border-box;background:#222222"></div>
<div class="a ft" style="top:421.69px;height:14px;line-height:14px;left:111.94px;"><span class="m">000</span></div>
<div class="a" style="left:483.71px;top:422.95px;width:15px;height:17px"><svg width="15" height="17" viewBox="0 0 15 17"><g transform="rotate(37.5 6.6 7.2)"><rect x="4.050" y="-.55" width="5.100" height="2.900" rx=".7" fill="#c8161d"/><rect x="4.050" y="2.200" width="5.100" height=".9" fill="#ece4d6"/><rect x="4.050" y="3.100" width="5.100" height="8" fill="#f5bd2a"/><rect x="5.600" y="3.100" width="1.800" height="8" fill="#f9d05a"/><path d="M4.050 11.100h5.100l-2.550 3.900z" fill="#f8ebc6"/><path d="M5.900 13.900h1.400l-.7 1.100z" fill="#5a5044"/></g><rect x="-.4" y="15" width="14.100" height="1" fill="#9c9c9c"/></svg></div>
<div class="a" style="left:501.44px;top:422.76px;width:17px;height:17px"><svg width="17" height="17" viewBox="0 0 17 17"><circle cx="8.500" cy="8.500" r="8.300" fill="#e30000"/><path d="M4.700 4.700l7.600 7.600M12.300 4.700l-7.600 7.600" stroke="#6a1212" stroke-width="1.400" stroke-linecap="round" opacity=".85"/><circle cx="8.500" cy="8.500" r="1.300" fill="#5e1010"/></svg></div>
<div class="a ft" style="top:455.76px;height:14px;line-height:14px;left:167px;width:200px;text-align:center;"><span class="c" style="width:4em">新增一项</span></div>
<div class="a" style="left:18.66px;top:490.2px;width:516.15px;height:133.57px;border:1px solid #bdbdbd;box-sizing:border-box"></div>
<div class="a ft" style="left:25.69px;top:483.74px;width:72.46px;height:14px;line-height:14px;background:#242424"><span class="c" style="width:6em">测试连接数据</span></div>
<div class="a ft" style="top:509.97px;height:14px;line-height:14px;left:28.66px;"><span class="c" style="width:2em">测试</span></div>
<div class="a" style="left:58.67px;top:506.15px;width:466.95px;height:21.36px;border:2px solid #7d7d7d;box-sizing:border-box;background:#222222"></div>
<div class="a ft" style="top:507.53px;height:14px;line-height:14px;left:60.84px;"><span class="m">.</span></div>
<svg class="a" style="left:510.1px;top:511.6px" width="14" height="11" viewBox="0 0 14 11"><path d="M0.3 0.4 H13.7 L7 10.6 Z" fill="#dcdcdc"/></svg>
<div class="a ft" style="top:538.63px;height:14px;line-height:14px;left:28.66px;"><span class="c" style="width:2em">测试</span><span class="m">2</span></div>
<div class="a" style="left:64.89px;top:534.54px;width:460.73px;height:21.63px;border:2px solid #7d7d7d;box-sizing:border-box;background:#222222"></div>
<div class="a ft" style="top:536.06px;height:14px;line-height:14px;left:67.05px;"><span class="m">True</span></div>
<svg class="a" style="left:510.1px;top:540.13px" width="14" height="11" viewBox="0 0 14 11"><path d="M0.3 0.4 H13.7 L7 10.6 Z" fill="#dcdcdc"/></svg>
<div class="a ft" style="top:567.56px;height:14px;line-height:14px;left:28.66px;"><span class="c" style="width:4em">新增名称</span></div>
<div class="a" style="left:80.03px;top:564.28px;width:406.11px;height:20.01px;border:2px solid #7d7d7d;box-sizing:border-box;background:#222222"></div>
<div class="a ft" style="top:564.99px;height:14px;line-height:14px;left:82.2px;"><span class="m">000000000</span></div>
<div class="a" style="left:489.66px;top:566.12px;width:15px;height:17px"><svg width="15" height="17" viewBox="0 0 15 17"><g transform="rotate(37.5 6.6 7.2)"><rect x="4.050" y="-.55" width="5.100" height="2.900" rx=".7" fill="#c8161d"/><rect x="4.050" y="2.200" width="5.100" height=".9" fill="#ece4d6"/><rect x="4.050" y="3.100" width="5.100" height="8" fill="#f5bd2a"/><rect x="5.600" y="3.100" width="1.800" height="8" fill="#f9d05a"/><path d="M4.050 11.100h5.100l-2.550 3.900z" fill="#f8ebc6"/><path d="M5.900 13.900h1.400l-.7 1.100z" fill="#5a5044"/></g><rect x="-.4" y="15" width="14.100" height="1" fill="#9c9c9c"/></svg></div>
<div class="a" style="left:507.38px;top:565.79px;width:17px;height:17px"><svg width="17" height="17" viewBox="0 0 17 17"><circle cx="8.500" cy="8.500" r="8.300" fill="#e30000"/><path d="M4.700 4.700l7.600 7.600M12.300 4.700l-7.600 7.600" stroke="#6a1212" stroke-width="1.400" stroke-linecap="round" opacity=".85"/><circle cx="8.500" cy="8.500" r="1.300" fill="#5e1010"/></svg></div>
<div class="a ft" style="top:599.19px;height:14px;line-height:14px;left:173.49px;width:200px;text-align:center;"><span class="c" style="width:4em">新增一项</span></div>
<div class="a" style="left:5.41px;top:650.67px;width:518.05px;height:97.61px;border:1px solid #bdbdbd;box-sizing:border-box"></div>
<div class="a ft" style="left:13.52px;top:644.21px;width:48.67px;height:14px;line-height:14px;background:#242424"><span class="c" style="width:4em">软件信息</span></div>
<div class="a ft" style="top:670.3px;height:14px;line-height:14px;left:16.22px;"><span class="c" style="width:4em">软件版本</span></div>
<div class="a" style="left:67.59px;top:666.76px;width:426.39px;height:20.28px;border:2px solid #7d7d7d;box-sizing:border-box;background:#6a6a6a"></div>
<div class="a ft" style="top:667.6px;height:14px;line-height:14px;left:69.76px;"><span class="m">20.0.4.0</span></div>
<div class="a" style="left:498.04px;top:668.59px;width:15px;height:17px"><svg width="15" height="17" viewBox="0 0 15 17"><g transform="rotate(37.5 6.6 7.2)"><rect x="4.050" y="-.55" width="5.100" height="2.900" rx=".7" fill="#c8161d"/><rect x="4.050" y="2.200" width="5.100" height=".9" fill="#ece4d6"/><rect x="4.050" y="3.100" width="5.100" height="8" fill="#f5bd2a"/><rect x="5.600" y="3.100" width="1.800" height="8" fill="#f9d05a"/><path d="M4.050 11.100h5.100l-2.550 3.900z" fill="#f8ebc6"/><path d="M5.900 13.900h1.400l-.7 1.100z" fill="#5a5044"/></g><rect x="-.4" y="15" width="14.100" height="1" fill="#9c9c9c"/></svg></div>
<div class="a ft" style="top:697.34px;height:14px;line-height:14px;left:16.22px;"><span class="c" style="width:6em">底部显示信息</span></div>
<div class="a" style="left:91.93px;top:693.66px;width:402.05px;height:19.74px;border:2px solid #7d7d7d;box-sizing:border-box;background:#6a6a6a"></div>
<div class="a ft" style="top:694.23px;height:14px;line-height:14px;left:94.09px;"><span class="c" style="width:5em">产品名称：</span><span class="m">WCC</span><span class="c" style="width:6em">数据导出工具</span><span class="m">  </span><span class="c" style="width:5em">软件版本：</span><span class="m">V1.0.0.1  </span><span class="c" style="width:5em">开发时间：</span><span class="m">2020/06</span></div>
<div class="a" style="left:498.04px;top:695.63px;width:15px;height:17px"><svg width="15" height="17" viewBox="0 0 15 17"><g transform="rotate(37.5 6.6 7.2)"><rect x="4.050" y="-.55" width="5.100" height="2.900" rx=".7" fill="#c8161d"/><rect x="4.050" y="2.200" width="5.100" height=".9" fill="#ece4d6"/><rect x="4.050" y="3.100" width="5.100" height="8" fill="#f5bd2a"/><rect x="5.600" y="3.100" width="1.800" height="8" fill="#f9d05a"/><path d="M4.050 11.100h5.100l-2.550 3.900z" fill="#f8ebc6"/><path d="M5.900 13.900h1.400l-.7 1.100z" fill="#5a5044"/></g><rect x="-.4" y="15" width="14.100" height="1" fill="#9c9c9c"/></svg></div>
<div class="a ft" style="top:724.38px;height:14px;line-height:14px;left:16.22px;"><span class="c" style="width:6em">软件更新记录</span></div>
<div class="a" style="left:91.93px;top:720.56px;width:402.05px;height:19.74px;border:2px solid #7d7d7d;box-sizing:border-box;background:#6a6a6a"></div>
<div class="a ft" style="top:723.43px;height:14px;line-height:14px;left:206.63px;width:300px;text-align:center;"><span class="c" style="width:4em">关于软件</span></div>
<div class="a" style="left:498.04px;top:722.67px;width:15px;height:17px"><svg width="15" height="17" viewBox="0 0 15 17"><g transform="rotate(37.5 6.6 7.2)"><rect x="4.050" y="-.55" width="5.100" height="2.900" rx=".7" fill="#c8161d"/><rect x="4.050" y="2.200" width="5.100" height=".9" fill="#ece4d6"/><rect x="4.050" y="3.100" width="5.100" height="8" fill="#f5bd2a"/><rect x="5.600" y="3.100" width="1.800" height="8" fill="#f9d05a"/><path d="M4.050 11.100h5.100l-2.550 3.900z" fill="#f8ebc6"/><path d="M5.900 13.900h1.400l-.7 1.100z" fill="#5a5044"/></g><rect x="-.4" y="15" width="14.100" height="1" fill="#9c9c9c"/></svg></div>
<div class="a ft" style="top:758.45px;height:14px;line-height:14px;left:298.81px;width:200px;text-align:center;"><span class="c" style="width:2em">保存</span></div>
<div class="a np" style="left:706.5px;top:382.05px;width:838.18px;height:700px;background:#fff;box-shadow:0 0 17px rgba(0,0,0,.32)">
<div class="a" style="left:7.6px;top:6px;width:16px;height:16px"><svg width="16" height="16" viewBox="0 0 16 16"><path d="M1.200 1.600h9l2.600 2.400v10.600h-11.600z" fill="#f4f4f4" stroke="#7a7a7a" stroke-width="1"/><path d="M2 8h10v6h-10z" fill="#55b62e"/><path d="M2 8h10v2.400h-10z" fill="#a8dc7c"/><path d="M3 3.600h6M3 5.600h5" stroke="#a8a8a8" stroke-width=".9"/><path d="M14.200 1.400l1.400 1.200-6.400 9-2 .9.400-2.100z" fill="#f1b02c" stroke="#8a5a16" stroke-width=".5"/><path d="M14.200 1.400l1.400 1.200.5-1.500z" fill="#c8161d"/></svg></div>
<div class="a tt" style="left:29.3px;top:6px;height:18px;line-height:18px">D:\CSDATA\WenSkin\WenSkinTest\bin\Debug\net46\WenAutoConfig.json - Notepad++ [Administrator]</div>
<div class="a mn" style="left:6.49px;top:32px;height:16px;line-height:16px"><span class="c" style="width:2em">文件</span>(F)</div>
<div class="a mn" style="left:59.21px;top:32px;height:16px;line-height:16px"><span class="c" style="width:2em">编辑</span>(E)</div>
<div class="a mn" style="left:111.67px;top:32px;height:16px;line-height:16px"><span class="c" style="width:2em">搜索</span>(S)</div>
<div class="a mn" style="left:163.99px;top:32px;height:16px;line-height:16px"><span class="c" style="width:2em">视图</span>(V)</div>
<div class="a mn" style="left:217.39px;top:32px;height:16px;line-height:16px"><span class="c" style="width:2em">编码</span>(N)</div>
<div class="a mn" style="left:273.35px;top:32px;height:16px;line-height:16px"><span class="c" style="width:2em">语言</span>(L)</div>
<div class="a mn" style="left:325.27px;top:32px;height:16px;line-height:16px"><span class="c" style="width:2em">设置</span>(T)</div>
<div class="a mn" style="left:378.8px;top:32px;height:16px;line-height:16px"><span class="c" style="width:2em">工具</span>(O)</div>
<div class="a mn" style="left:434.5px;top:32px;height:16px;line-height:16px"><span class="c" style="width:1em">宏</span>(M)</div>
<div class="a mn" style="left:480.47px;top:32px;height:16px;line-height:16px"><span class="c" style="width:2em">运行</span>(R)</div>
<div class="a mn" style="left:533.73px;top:32px;height:16px;line-height:16px"><span class="c" style="width:2em">插件</span>(P)</div>
<div class="a mn" style="left:587.54px;top:32px;height:16px;line-height:16px"><span class="c" style="width:2em">窗口</span>(W)</div>
<div class="a mn" style="left:645.67px;top:32px;height:16px;line-height:16px">?</div>
<div class="a" style="left:0;top:49.4px;width:838.18px;height:1px;background:#f0f0f0"></div>
<div class="a" style="left:4.4px;top:53.3px;width:16px;height:16px"><svg width="16" height="16" viewBox="0 0 16 16"><path d="M1.4 .9h7.4l3.8 3.8v10.4h-11.2z" fill="#fdfdfd" stroke="#bdbdbd" stroke-width="1"/><path d="M8.8 .9v3.8h3.8" fill="#e9e9e9" stroke="#bdbdbd" stroke-width=".8"/><circle cx="12" cy="12.4" r="3.5" fill="#43a535"/><path d="M12 10.600v3.600M10.200 12.400h3.600" stroke="#e4f6dc" stroke-width="1.200"/></svg></div>
<div class="a" style="left:27.4px;top:53.3px;width:16px;height:16px"><svg width="16" height="16" viewBox="0 0 16 16"><path d="M6.5 .8h5.6l2.6 2.6v7.4h-8.2z" fill="#a9cbf3" stroke="#6f9fe0" stroke-width=".9"/><path d="M.8 6.2h4.6l1.2 1.4h6.2v7.2h-12z" fill="#f6c653" stroke="#e3992a" stroke-width=".9"/><rect x="1.6" y="9" width="10.4" height="2" fill="#fbe09a"/></svg></div>
<div class="a" style="left:50.4px;top:53.3px;width:16px;height:16px"><svg width="16" height="16" viewBox="0 0 16 16"><path d="M1.2 1.2h13.6v13.6h-13.6z" fill="#8e8e8e"/><rect x="3.6" y="1.2" width="8.4" height="5.6" fill="#e4e4e4"/><rect x="5.2" y="2" width="1.4" height="3.2" fill="#7a7a7a"/><rect x="3.2" y="9.2" width="9.6" height="5.6" fill="#dadada"/><rect x="4.6" y="11" width="6.8" height="2.2" fill="#8e8e8e"/></svg></div>
<div class="a" style="left:73.4px;top:53.3px;width:16px;height:16px"><svg width="16" height="16" viewBox="0 0 16 16"><path d="M1.6 1h8.6v8.4h-8.6z" fill="#9a9a9a"/><path d="M3.8 3.2h8.6v8.6h-8.6z" fill="#8a8a8a" stroke="#f4f4f4" stroke-width=".7"/><path d="M6 5.6h8.6v8.8h-8.6z" fill="#8e8e8e" stroke="#f4f4f4" stroke-width=".7"/><rect x="8" y="6" width="4.6" height="2.6" fill="#dedede"/></svg></div>
<div class="a" style="left:96.4px;top:53.3px;width:16px;height:16px"><svg width="16" height="16" viewBox="0 0 16 16"><path d="M1.4 .9h7.4l3.8 3.8v10.4h-11.2z" fill="#fdfdfd" stroke="#bdbdbd" stroke-width="1"/><path d="M8.8 .9v3.8h3.8" fill="#e9e9e9" stroke="#bdbdbd" stroke-width=".8"/><path d="M4.4 6h5.6M4.4 8h5.6M4.4 10h3" stroke="#c8c8c8" stroke-width=".9"/><circle cx="11.6" cy="12" r="3.3" fill="#ea7a2c"/><circle cx="11.1" cy="11.4" r="1.3" fill="#f6a869"/></svg></div>
<div class="a" style="left:119.4px;top:53.3px;width:16px;height:16px"><svg width="16" height="16" viewBox="0 0 16 16"><path d="M1.2 1.2h5.2l2.4 2.4v8h-7.6z" fill="#fbfbfb" stroke="#cacaca" stroke-width=".9"/><path d="M4.6 3h5.2l2.6 2.6v8.6h-7.8z" fill="#fdfdfd" stroke="#c4c4c4" stroke-width=".9"/><circle cx="11.8" cy="12" r="3.3" fill="#ea7a2c"/><circle cx="11.3" cy="11.4" r="1.3" fill="#f6a869"/></svg></div>
<div class="a" style="left:142.4px;top:53.3px;width:16px;height:16px"><svg width="16" height="16" viewBox="0 0 16 16"><path d="M4 1h6.4l2 2v5h-8.4z" fill="#bcd6f5" stroke="#6a9be0" stroke-width=".9"/><rect x=".9" y="6.4" width="14.2" height="6.4" rx="1.4" fill="#a9a9a9" stroke="#6c6c6c" stroke-width=".9"/><rect x="3.4" y="8.2" width="9.2" height="1.6" fill="#e6e6e6"/><path d="M3.6 11h8.8v3.8h-8.8z" fill="#d6e6f8" stroke="#6a9be0" stroke-width=".9"/></svg></div>
<div class="a" style="left:164.2px;top:52.6px;width:1.1px;height:17.6px;background:#858585"></div>
<div class="a" style="left:173.4px;top:53.3px;width:16px;height:16px"><svg width="16" height="16" viewBox="0 0 16 16"><path d="M10.400 .8 L6.400 10.200 M5 1.400 L9.800 10.200" stroke="#8a8a8a" stroke-width="2.300" fill="none" stroke-linecap="round"/><circle cx="4.800" cy="12.400" r="2.200" fill="none" stroke="#8a8a8a" stroke-width="1.700"/><circle cx="10.800" cy="12.600" r="2.200" fill="none" stroke="#8a8a8a" stroke-width="1.700"/></svg></div>
<div class="a" style="left:196.4px;top:53.3px;width:16px;height:16px"><svg width="16" height="16" viewBox="0 0 16 16"><path d="M1.6 1.2h5l2.6 2.6v7.4h-7.6z" fill="#b9b9b9" stroke="#8c8c8c" stroke-width=".9"/><path d="M6.2 4.6h5l2.8 2.8v7.6h-7.8z" fill="#a4a4a4" stroke="#f0f0f0" stroke-width=".9"/><path d="M6.2 4.6h5l2.8 2.8v7.6h-7.8z" fill="none" stroke="#8a8a8a" stroke-width=".5"/></svg></div>
<div class="a" style="left:219.4px;top:53.3px;width:16px;height:16px"><svg width="16" height="16" viewBox="0 0 16 16"><rect x="1.2" y="2" width="10.6" height="12.4" rx="1" fill="#cd8f45" stroke="#a86a22" stroke-width=".9"/><rect x="4" y=".8" width="5" height="2.6" rx=".6" fill="#e8c07a" stroke="#a86a22" stroke-width=".6"/><path d="M6.6 6h5l2.8 2.8v6.4h-7.8z" fill="#dbe8fb" stroke="#6f9fe0" stroke-width=".9"/></svg></div>
<div class="a" style="left:241.2px;top:52.6px;width:1.1px;height:17.6px;background:#858585"></div>
<div class="a" style="left:250.4px;top:53.3px;width:16px;height:16px"><svg width="16" height="16" viewBox="0 0 16 16"><path d="M5 11h4.600a3.400 3.400 0 0 0 0-6.800h-5" fill="none" stroke="#8a8a8a" stroke-width="3.600"/><path d="M.4 11l5.200-4.600v9.200z" fill="#8a8a8a"/></svg></div>
<div class="a" style="left:273.4px;top:53.3px;width:16px;height:16px"><svg width="16" height="16" viewBox="0 0 16 16"><path d="M11 5h-4.600a3.400 3.400 0 0 0 0 6.800h5" fill="none" stroke="#8a8a8a" stroke-width="3.600"/><path d="M15.600 5l-5.200-4.600v9.200z" fill="#8a8a8a"/></svg></div>
<div class="a" style="left:295.2px;top:52.6px;width:1.1px;height:17.6px;background:#858585"></div>
<div class="a" style="left:304.4px;top:53.3px;width:16px;height:16px"><svg width="16" height="16" viewBox="0 0 16 16"><path d="M2.6 5.2l1-3.2h2.6l.6 3.2M9.2 5.2l.6-3.2h2.6l1 3.2" fill="#394a5c"/><rect x="1" y="5" width="6.2" height="8.6" rx="1.2" fill="#1f2a36"/><rect x="8.8" y="5" width="6.2" height="8.6" rx="1.2" fill="#1f2a36"/><rect x="6.6" y="5.6" width="2.8" height="3.4" fill="#32414f"/><rect x="2" y="6" width="1.6" height="6" fill="#5a7088"/><rect x="9.8" y="6" width="1.6" height="6" fill="#5a7088"/></svg></div>
<div class="a" style="left:327.4px;top:53.3px;width:16px;height:16px"><svg width="16" height="16" viewBox="0 0 16 16"><text x=".2" y="8" font-family="Liberation Sans" font-weight="bold" font-style="italic" font-size="11.5" fill="#2b73e0">b</text><text x="7" y="15.600" font-family="Liberation Sans" font-weight="bold" font-size="13" fill="#3a86ee">a</text><path d="M4.600 8.200l4.600 1.400-3 2.600z" fill="#35a45a"/></svg></div>
<div class="a" style="left:349.2px;top:52.6px;width:1.1px;height:17.6px;background:#858585"></div>
<div class="a" style="left:358.4px;top:53.3px;width:16px;height:16px"><svg width="16" height="16" viewBox="0 0 16 16"><circle cx="6.4" cy="6.4" r="5.4" fill="#d6e6fa" stroke="#a9c6ee" stroke-width="1"/><circle cx="5" cy="5" r="2.4" fill="#ecf4fd"/><path d="M10.600 10.800l2.600 2.600" stroke="#a9672a" stroke-width="2.600" stroke-linecap="round"/><path d="M10.2 3.4v6.4M7 6.6h6.4" stroke="#3e9f38" stroke-width="2.6"/></svg></div>
<div class="a" style="left:381.4px;top:53.3px;width:16px;height:16px"><svg width="16" height="16" viewBox="0 0 16 16"><circle cx="6.4" cy="6.4" r="5.4" fill="#d6e6fa" stroke="#a9c6ee" stroke-width="1"/><circle cx="5" cy="5" r="2.4" fill="#ecf4fd"/><path d="M10.600 10.800l2.600 2.600" stroke="#a9672a" stroke-width="2.600" stroke-linecap="round"/><rect x="7.4" y="4.8" width="6.4" height="3.2" fill="#e8323c"/></svg></div>
<div class="a" style="left:403.2px;top:52.6px;width:1.1px;height:17.6px;background:#858585"></div>
<div class="a" style="left:412.4px;top:53.3px;width:16px;height:16px"><svg width="16" height="16" viewBox="0 0 16 16"><rect x="1" y="1.4" width="13.4" height="11" fill="#fff" stroke="#8db4ea" stroke-width="1.3"/><rect x="1" y="1.4" width="13.4" height="2.2" fill="#7fa9e6"/><path d="M7.4 3v9" stroke="#8db4ea" stroke-width="1.2"/><path d="M8.2 9.2v-2a2.3 2.3 0 0 1 4.6 0v2" fill="none" stroke="#a8a8a8" stroke-width="1.5"/><rect x="6.6" y="8.8" width="7.8" height="6.4" rx=".6" fill="#f3bf4a" stroke="#d79a1e" stroke-width=".8"/><rect x="7.2" y="9.4" width="6.6" height="1.8" fill="#fbdc8a"/></svg></div>
<div class="a" style="left:435.4px;top:53.3px;width:16px;height:16px"><svg width="16" height="16" viewBox="0 0 16 16"><rect x="1" y="1.4" width="13.4" height="11" fill="#fff" stroke="#8db4ea" stroke-width="1.3"/><rect x="1" y="1.4" width="13.4" height="2.2" fill="#7fa9e6"/><path d="M1 7.6h13" stroke="#8db4ea" stroke-width="1.2"/><path d="M8.2 9.2v-2a2.3 2.3 0 0 1 4.6 0v2" fill="none" stroke="#a8a8a8" stroke-width="1.5"/><rect x="6.6" y="8.8" width="7.8" height="6.4" rx=".6" fill="#f3bf4a" stroke="#d79a1e" stroke-width=".8"/><rect x="7.2" y="9.4" width="6.6" height="1.8" fill="#fbdc8a"/></svg></div>
<div class="a" style="left:457.2px;top:52.6px;width:1.1px;height:17.6px;background:#858585"></div>
<div class="a" style="left:466.4px;top:53.3px;width:16px;height:16px"><svg width="16" height="16" viewBox="0 0 16 16"><path d="M1 3h9M1 5.8h7" stroke="#3a3a3a" stroke-width="1.3"/><path d="M1 8.6h14v4h-3" fill="none" stroke="#4a86dc" stroke-width="1.4"/><path d="M1 12.4h8" stroke="#4a86dc" stroke-width="1.6"/><path d="M13 10.4l-2.6 2.2 2.6 2.2z" fill="#4a86dc"/></svg></div>
<div class="a" style="left:489.4px;top:53.3px;width:16px;height:16px"><svg width="16" height="16" viewBox="0 0 16 16"><path d="M7.600 2.200v11.400M10.400 2.200v11.400" stroke="#5a9cee" stroke-width="1.400"/><path d="M8.200 2.200h-2.400a3 3 0 0 0 0 6h2.400z" fill="#5a9cee"/><path d="M5.600 2.200h6.200" stroke="#5a9cee" stroke-width="1.200"/></svg></div>
<div class="a" style="left:508.9px;top:49.6px;width:23px;height:21.6px;background:#cce8ff;border:1px solid #7ab7ee;box-sizing:border-box"></div>
<div class="a" style="left:512.4px;top:53.3px;width:16px;height:16px"><svg width="16" height="16" viewBox="0 0 16 16"><path d="M5 1.4h8.6M8 4.6h6.4M8 7.8h5M5 11h7.6M3 13.6h5.6" stroke="#1f2fff" stroke-width="1.7"/><path d="M6 2.4v8" stroke="#ff2a2a" stroke-width="1.2" stroke-dasharray="1.4 1"/><path d="M7.6 11v4.4" stroke="#1f2fff" stroke-width="1" stroke-dasharray="1.2 1"/></svg></div>
<div class="a" style="left:535.4px;top:53.3px;width:16px;height:16px"><svg width="16" height="16" viewBox="0 0 16 16"><rect x="1" y="2" width="14" height="11" rx="1" fill="#fbfdff" stroke="#7fa6e0" stroke-width="1.2"/><rect x="1" y="2" width="14" height="2.6" fill="#7fa6e0"/><path d="M9.8 5.4l-5 4.6h3l-2 4.2 6-5.6h-3.2l2.6-3.2z" fill="#f2c23a" stroke="#e0a420" stroke-width=".5"/></svg></div>
<div class="a" style="left:558.4px;top:53.3px;width:16px;height:16px"><svg width="16" height="16" viewBox="0 0 16 16"><rect x="1.2" y="1.2" width="13.6" height="13.6" rx="1" fill="#9fd28a" stroke="#8e8e8e" stroke-width="1.3"/><path d="M2 2h5l-2 6 3 6.4h-6z" fill="#e6e27a"/><path d="M10 2h4.4v6z" fill="#f0e58c"/><path d="M4 2.4l4.4 7 1 5M8.2 9.6l5-3.6" fill="none" stroke="#e8553c" stroke-width="1.3"/></svg></div>
<div class="a" style="left:581.4px;top:53.3px;width:16px;height:16px"><svg width="16" height="16" viewBox="0 0 16 16"><path d="M3.6 1.4h6.6l3.6 3.6v9.6h-10.2z" fill="#fff" stroke="#9a9a9a" stroke-width="1"/><path d="M10.2 1.4v3.6h3.6" fill="#eee" stroke="#9a9a9a" stroke-width=".8"/><path d="M10.4 3.2c-2.4-.8-3.4.6-3.8 3.2l-1 6.2c-.3 1.6-1.4 2.2-3 1.6" fill="none" stroke="#e0222e" stroke-width="1.9"/><path d="M4 8h5" stroke="#e0222e" stroke-width="1.6"/></svg></div>
<div class="a" style="left:604.4px;top:53.3px;width:16px;height:16px"><svg width="16" height="16" viewBox="0 0 16 16"><path d="M1 3.4h5l1 1.4h8v9.4h-14z" fill="#f7c5c8" stroke="#e88d94" stroke-width="1"/><path d="M1.6 7h12.8" stroke="#e88d94" stroke-width=".9"/><path d="M2 8.2h12v1.4h-12z" fill="#fbe1e3"/></svg></div>
<div class="a" style="left:627.4px;top:53.3px;width:16px;height:16px"><svg width="16" height="16" viewBox="0 0 16 16"><path d="M.6 8c3-5.4 11.800-5.400 14.800 0-3 5.400-11.800 5.400-14.800 0z" fill="#fdf6ec" stroke="#e2b06c" stroke-width="1.1"/><circle cx="8" cy="7.800" r="3.400" fill="#6fa8e6"/><circle cx="8" cy="7.800" r="1.700" fill="#23467e"/><circle cx="7" cy="6.600" r=".8" fill="#fff"/></svg></div>
<div class="a" style="left:649.2px;top:52.6px;width:1.1px;height:17.6px;background:#858585"></div>
<div class="a" style="left:658.4px;top:53.3px;width:16px;height:16px"><svg width="16" height="16" viewBox="0 0 16 16"><rect x="1.5" y="1.5" width="13" height="13" rx="1" fill="#fdfdfd" stroke="#b8b8b8" stroke-width="1.4"/><circle cx="8" cy="8" r="3.6" fill="#d80814"/></svg></div>
<div class="a" style="left:681.4px;top:53.3px;width:16px;height:16px"><svg width="16" height="16" viewBox="0 0 16 16"><rect x="1.5" y="1.5" width="13" height="13" rx="1" fill="#fdfdfd" stroke="#b8b8b8" stroke-width="1.4"/><rect x="4.600" y="4.600" width="6.800" height="6.800" fill="#8f8f8f"/></svg></div>
<div class="a" style="left:704.4px;top:53.3px;width:16px;height:16px"><svg width="16" height="16" viewBox="0 0 16 16"><rect x="1.5" y="1.5" width="13" height="13" rx="1" fill="#fdfdfd" stroke="#b8b8b8" stroke-width="1.4"/><path d="M5.600 3.800l5.600 4.200-5.600 4.200z" fill="#8f8f8f"/></svg></div>
<div class="a" style="left:727.4px;top:53.3px;width:16px;height:16px"><svg width="16" height="16" viewBox="0 0 16 16"><rect x="1.5" y="1.5" width="13" height="13" rx="1" fill="#fdfdfd" stroke="#b8b8b8" stroke-width="1.4"/><path d="M3.200 3.600l5 4.400-5 4.400zM8 3.600l5 4.400-5 4.400z" fill="#3f82e8"/></svg></div>
<div class="a" style="left:750.4px;top:53.3px;width:16px;height:16px"><svg width="16" height="16" viewBox="0 0 16 16"><rect x=".8" y=".8" width="10.400" height="10.400" fill="#9a9a9a"/><path d="M2.400 3.400h7.200M2.400 6h7.200M5.200 2.400v7" stroke="#e2e2e2" stroke-width="1"/><rect x="6.400" y="6.400" width="8.800" height="8.800" fill="#8a8a8a" stroke="#f0f0f0" stroke-width=".6"/><rect x="8.400" y="6.800" width="4.400" height="2.600" fill="#d8d8d8"/></svg></div>
<div class="a" style="left:772.2px;top:52.6px;width:1.1px;height:17.6px;background:#858585"></div>
<div class="a" style="left:781.4px;top:53.3px;width:16px;height:16px"><svg width="16" height="16" viewBox="0 0 16 16"><path d="M1 1h14v11h-5l-2 2.600-2-2.600h-5z" fill="#fff" stroke="#3d6fd6" stroke-width="1.700"/><circle cx="8" cy="4.800" r="1.700" fill="#e03a2e"/><path d="M4.800 10.400c0-3 6.400-3 6.400 0z" fill="#2f9a44"/></svg></div>
<div class="a" style="left:0;top:73.6px;width:838.18px;height:27px;background:#f0f0f0"></div>
<div class="a" style="left:2.2px;top:76.6px;width:148.6px;height:23.4px;background:#f6f6f6;border-right:1.5px solid #6e6e6e;box-sizing:border-box"></div>
<div class="a" style="left:2.2px;top:76.2px;width:147.6px;height:4.2px;background:#faa31e"></div>
<div class="a" style="left:6.5px;top:83.2px;width:13px;height:13px"><svg width="13" height="13" viewBox="0 0 13 13"><rect x=".6" y=".6" width="11.800" height="11.800" rx=".8" fill="#4f8fe0" stroke="#3a74c6" stroke-width=".8"/><rect x="2.800" y=".8" width="7.400" height="4.600" fill="#eef4fc"/><rect x="2.600" y="7.400" width="7.800" height="5" fill="#9cd67e"/><rect x="2.600" y="7.400" width="7.800" height="1.600" fill="#d7e9fb"/></svg></div>
<div class="a tb" style="left:25.4px;top:83px;height:14px;line-height:14px">WenAutoConfig.json</div>
<div class="a" style="left:134.2px;top:85.4px;width:10px;height:10px"><svg width="10" height="10" viewBox="0 0 10 10"><rect x="0" y="0" width="10" height="10" fill="#b5476b"/><path d="M2.200 2.200l5.600 5.600M7.800 2.200l-5.600 5.600" stroke="#fff" stroke-width="1.500"/></svg></div>
<div class="a" style="left:0;top:100.2px;width:838.18px;height:1.6px;background:#6e6e6e"></div>
<div class="a" style="left:2.3px;top:101px;width:1.9px;height:600px;background:#9c9c9c"></div>
<div class="a ed" style="left:4px;top:102px;width:834.18px;height:460.6px"><div class="a" style="left:0;top:0;width:47.6px;height:600px;background:#e4e4e4"></div>
<div class="a" style="left:47.6px;top:0;width:14.2px;height:600px;background:#f3f3f3"></div>
<div class="a" style="left:61.8px;top:224.31px;width:900px;height:15.93px;background:#e8e8ff"></div>
<div class="a" style="left:54.9px;top:0;width:1px;height:600px;background:#7c7c7c"></div>
<div class="a" style="left:54.8px;top:170.05px;width:1.4px;height:175.26px;background:#f01414"></div>
<div class="a" style="left:54.9px;top:136.78px;width:6px;height:1.1px;background:#7c7c7c"></div>
<div class="a" style="left:54.9px;top:152.71px;width:6px;height:1.1px;background:#7c7c7c"></div>
<div class="a" style="left:54.9px;top:343.91px;width:6px;height:1.1px;background:#f01414"></div>
<div class="a" style="left:54.9px;top:359.84px;width:6px;height:1.1px;background:#7c7c7c"></div>
<div class="a" style="left:54.9px;top:391.71px;width:6px;height:1.1px;background:#7c7c7c"></div>
<div class="a" style="left:54.9px;top:407.64px;width:6px;height:1.1px;background:#7c7c7c"></div>
<div class="a" style="left:54.9px;top:423.57px;width:6px;height:1.1px;background:#7c7c7c"></div>
<div class="a" style="left:54.9px;top:439.51px;width:6px;height:1.1px;background:#7c7c7c"></div>
<div class="a" style="left:54.9px;top:455.44px;width:6px;height:1.1px;background:#7c7c7c"></div>
<div class="a" style="left:49.9px;top:84.88px;width:11px;height:11px;box-sizing:border-box;border:1.3px solid #8a8a8a;background:#fff"><div class="a" style="left:1.6px;top:3.6px;width:5.2px;height:1.3px;background:#8a8a8a"></div></div>
<div class="a" style="left:49.9px;top:164.55px;width:11px;height:11px;box-sizing:border-box;border:1.3px solid #f01414;background:#fff"><div class="a" style="left:1.6px;top:3.6px;width:5.2px;height:1.3px;background:#f01414"></div></div>
<div class="a" style="left:95.7px;top:0;width:1px;height:448.87px;background-image:repeating-linear-gradient(180deg,#b4b4b4 0,#b4b4b4 1.35px,transparent 1.35px,transparent 2.7px)"></div>
<div class="a" style="left:127.7px;top:0;width:1px;height:417.01px;background-image:repeating-linear-gradient(180deg,#b4b4b4 0,#b4b4b4 1.35px,transparent 1.35px,transparent 2.7px)"></div>
<div class="a" style="left:159.7px;top:0;width:1px;height:385.14px;background-image:repeating-linear-gradient(180deg,#b4b4b4 0,#b4b4b4 1.35px,transparent 1.35px,transparent 2.7px)"></div>
<div class="a" style="left:191.7px;top:0;width:1px;height:337.34px;background-image:repeating-linear-gradient(180deg,#b4b4b4 0,#b4b4b4 1.35px,transparent 1.35px,transparent 2.7px)"></div>
<div class="a ln" style="left:0;top:2.75px;width:29.2px;height:15.93px;line-height:15.93px">198</div>
<div class="a cl" style="left:206.4px;top:2.75px;height:15.93px;line-height:15.93px"><span class="k">&quot;Delete&quot;</span><span class="p">: </span><span class="b">false</span><span class="p">,</span></div>
<div class="a ln" style="left:0;top:18.68px;width:29.2px;height:15.93px;line-height:15.93px">199</div>
<div class="a cl" style="left:206.4px;top:18.68px;height:15.93px;line-height:15.93px"><span class="k">&quot;Value&quot;</span><span class="p">: </span><span class="v">&quot;True&quot;</span><span class="p">,</span></div>
<div class="a ln" style="left:0;top:34.62px;width:29.2px;height:15.93px;line-height:15.93px">200</div>
<div class="a cl" style="left:206.4px;top:34.62px;height:15.93px;line-height:15.93px"><span class="k">&quot;Tip&quot;</span><span class="p">: </span><span class="v">&quot;<span class="c" style="width:4em">测试备注</span>&quot;</span><span class="p">,</span></div>
<div class="a ln" style="left:0;top:50.55px;width:29.2px;height:15.93px;line-height:15.93px">201</div>
<div class="a cl" style="left:206.4px;top:50.55px;height:15.93px;line-height:15.93px"><span class="k">&quot;Visible&quot;</span><span class="p">: </span><span class="b">true</span><span class="p">,</span></div>
<div class="a ln" style="left:0;top:66.48px;width:29.2px;height:15.93px;line-height:15.93px">202</div>
<div class="a cl" style="left:206.4px;top:66.48px;height:15.93px;line-height:15.93px"><span class="k">&quot;ComboBox&quot;</span><span class="p">: </span><span class="b">true</span><span class="p">,</span></div>
<div class="a ln" style="left:0;top:82.41px;width:29.2px;height:15.93px;line-height:15.93px">203</div>
<div class="a cl" style="left:206.4px;top:82.41px;height:15.93px;line-height:15.93px"><span class="k">&quot;Items&quot;</span><span class="p">: [</span></div>
<div class="a ln" style="left:0;top:98.35px;width:29.2px;height:15.93px;line-height:15.93px">204</div>
<div class="a cl" style="left:222.4px;top:98.35px;height:15.93px;line-height:15.93px"><span class="v">&quot;True&quot;</span><span class="p">,</span></div>
<div class="a ln" style="left:0;top:114.28px;width:29.2px;height:15.93px;line-height:15.93px">205</div>
<div class="a cl" style="left:222.4px;top:114.28px;height:15.93px;line-height:15.93px"><span class="v">&quot;False&quot;</span></div>
<div class="a ln" style="left:0;top:130.21px;width:29.2px;height:15.93px;line-height:15.93px">206</div>
<div class="a cl" style="left:206.4px;top:130.21px;height:15.93px;line-height:15.93px"><span class="p">]</span></div>
<div class="a ln" style="left:0;top:146.15px;width:29.2px;height:15.93px;line-height:15.93px">207</div>
<div class="a cl" style="left:190.4px;top:146.15px;height:15.93px;line-height:15.93px"><span class="p">},</span></div>
<div class="a ln" style="left:0;top:162.08px;width:29.2px;height:15.93px;line-height:15.93px">208</div>
<div class="a cl" style="left:190.4px;top:162.08px;height:15.93px;line-height:15.93px"><span class="p">{</span></div>
<div class="a ln" style="left:0;top:178.01px;width:29.2px;height:15.93px;line-height:15.93px">209</div>
<div class="a cl" style="left:206.4px;top:178.01px;height:15.93px;line-height:15.93px"><span class="k">&quot;Name&quot;</span><span class="p">: </span><span class="v">&quot;TestConfig003&quot;</span><span class="p">,</span></div>
<div class="a ln" style="left:0;top:193.95px;width:29.2px;height:15.93px;line-height:15.93px">210</div>
<div class="a cl" style="left:206.4px;top:193.95px;height:15.93px;line-height:15.93px"><span class="k">&quot;Info&quot;</span><span class="p">: </span><span class="v">&quot;<span class="c" style="width:4em">新增名称</span>&quot;</span><span class="p">,</span></div>
<div class="a ln" style="left:0;top:209.88px;width:29.2px;height:15.93px;line-height:15.93px">211</div>
<div class="a cl" style="left:206.4px;top:209.88px;height:15.93px;line-height:15.93px"><span class="k">&quot;Ecc&quot;</span><span class="p">: </span><span class="b">false</span><span class="p">,</span></div>
<div class="a ln" style="left:0;top:225.81px;width:29.2px;height:15.93px;line-height:15.93px">212</div>
<div class="a cl" style="left:206.4px;top:225.81px;height:15.93px;line-height:15.93px"><span class="k">&quot;ReadOnly&quot;</span><span class="p">: </span><span class="b">false</span><span class="p">,</span></div>
<div class="a ln" style="left:0;top:241.75px;width:29.2px;height:15.93px;line-height:15.93px">213</div>
<div class="a cl" style="left:206.4px;top:241.75px;height:15.93px;line-height:15.93px"><span class="k">&quot;Delete&quot;</span><span class="p">: </span><span class="b">true</span><span class="p">,</span></div>
<div class="a ln" style="left:0;top:257.68px;width:29.2px;height:15.93px;line-height:15.93px">214</div>
<div class="a cl" style="left:206.4px;top:257.68px;height:15.93px;line-height:15.93px"><span class="k">&quot;Value&quot;</span><span class="p">: </span><span class="v">&quot;000000000&quot;</span><span class="p">,</span></div>
<div class="a ln" style="left:0;top:273.61px;width:29.2px;height:15.93px;line-height:15.93px">215</div>
<div class="a cl" style="left:206.4px;top:273.61px;height:15.93px;line-height:15.93px"><span class="k">&quot;Tip&quot;</span><span class="p">: </span><span class="v">&quot;&quot;</span><span class="p">,</span></div>
<div class="a ln" style="left:0;top:289.54px;width:29.2px;height:15.93px;line-height:15.93px">216</div>
<div class="a cl" style="left:206.4px;top:289.54px;height:15.93px;line-height:15.93px"><span class="k">&quot;Visible&quot;</span><span class="p">: </span><span class="b">true</span><span class="p">,</span></div>
<div class="a ln" style="left:0;top:305.48px;width:29.2px;height:15.93px;line-height:15.93px">217</div>
<div class="a cl" style="left:206.4px;top:305.48px;height:15.93px;line-height:15.93px"><span class="k">&quot;ComboBox&quot;</span><span class="p">: </span><span class="b">false</span><span class="p">,</span></div>
<div class="a ln" style="left:0;top:321.41px;width:29.2px;height:15.93px;line-height:15.93px">218</div>
<div class="a cl" style="left:206.4px;top:321.41px;height:15.93px;line-height:15.93px"><span class="k">&quot;Items&quot;</span><span class="p">: []</span></div>
<div class="a ln" style="left:0;top:337.34px;width:29.2px;height:15.93px;line-height:15.93px">219</div>
<div class="a cl" style="left:190.4px;top:337.34px;height:15.93px;line-height:15.93px"><span class="p">}</span></div>
<div class="a ln" style="left:0;top:353.28px;width:29.2px;height:15.93px;line-height:15.93px">220</div>
<div class="a cl" style="left:174.4px;top:353.28px;height:15.93px;line-height:15.93px"><span class="p">],</span></div>
<div class="a ln" style="left:0;top:369.21px;width:29.2px;height:15.93px;line-height:15.93px">221</div>
<div class="a cl" style="left:174.4px;top:369.21px;height:15.93px;line-height:15.93px"><span class="k">&quot;Groups&quot;</span><span class="p">: []</span></div>
<div class="a ln" style="left:0;top:385.14px;width:29.2px;height:15.93px;line-height:15.93px">222</div>
<div class="a cl" style="left:158.4px;top:385.14px;height:15.93px;line-height:15.93px"><span class="p">}</span></div>
<div class="a ln" style="left:0;top:401.07px;width:29.2px;height:15.93px;line-height:15.93px">223</div>
<div class="a cl" style="left:142.4px;top:401.07px;height:15.93px;line-height:15.93px"><span class="p">]</span></div>
<div class="a ln" style="left:0;top:417.01px;width:29.2px;height:15.93px;line-height:15.93px">224</div>
<div class="a cl" style="left:126.4px;top:417.01px;height:15.93px;line-height:15.93px"><span class="p">}</span></div>
<div class="a ln" style="left:0;top:432.94px;width:29.2px;height:15.93px;line-height:15.93px">225</div>
<div class="a cl" style="left:110.4px;top:432.94px;height:15.93px;line-height:15.93px"><span class="p">]</span></div>
<div class="a ln" style="left:0;top:448.87px;width:29.2px;height:15.93px;line-height:15.93px">226</div>
<div class="a cl" style="left:94.4px;top:448.87px;height:15.93px;line-height:15.93px"><span class="p">},</span></div>
<div class="a ln" style="left:0;top:464.81px;width:29.2px;height:15.93px;line-height:15.93px">227</div>
<div class="a cl" style="left:94.4px;top:464.81px;height:15.93px;line-height:15.93px"><span class="p">{</span></div></div>
<div class="a" style="left:0;top:563.8px;width:838.18px;height:60px;background:#f0f0f0;border-top:1.5px solid #8e8e8e"></div>
</div>
<div class="a" style="left:828.44px;top:866.03px;width:60px;height:48px"><svg width="60" height="48" viewBox="0 0 60 48"><g opacity=".72"><path d="M22 1.500c-11 0-20 7.600-20 17 0 5.400 3 10.200 7.600 13.200l-2 6.200 7.400-3.800c2.200.7 4.600 1 7 1 .8 0 1.600 0 2.400-.1a14.500 14.500 0 0 1-.7-4.400c0-8.600 8-15.400 17.700-15.400h.5C40 7.300 31.800 1.500 22 1.500z" fill="#8d8d8d"/><ellipse cx="41.400" cy="31" rx="16.800" ry="14" fill="#8d8d8d"/><path d="M50 41.500l4.800 5-1.400-7.600z" fill="#8d8d8d"/><circle cx="15.200" cy="13.400" r="2.500" fill="#fff"/><circle cx="28.600" cy="13.400" r="2.500" fill="#fff"/><circle cx="35.800" cy="26.600" r="2.100" fill="#fff"/><circle cx="47" cy="26.600" r="2.100" fill="#fff"/></g></svg></div>
<div class="a wm" style="left:896.85px;top:866.17px;height:50px;line-height:50px"><span class="c" style="width:3em">公众号</span><span style="display:inline-block;width:44.6px;text-align:center">·</span><span class="c" style="width:5em">码农小白学</span><span style="font-size:43.4px">DotNet</span></div>
</div></div></body></html>
